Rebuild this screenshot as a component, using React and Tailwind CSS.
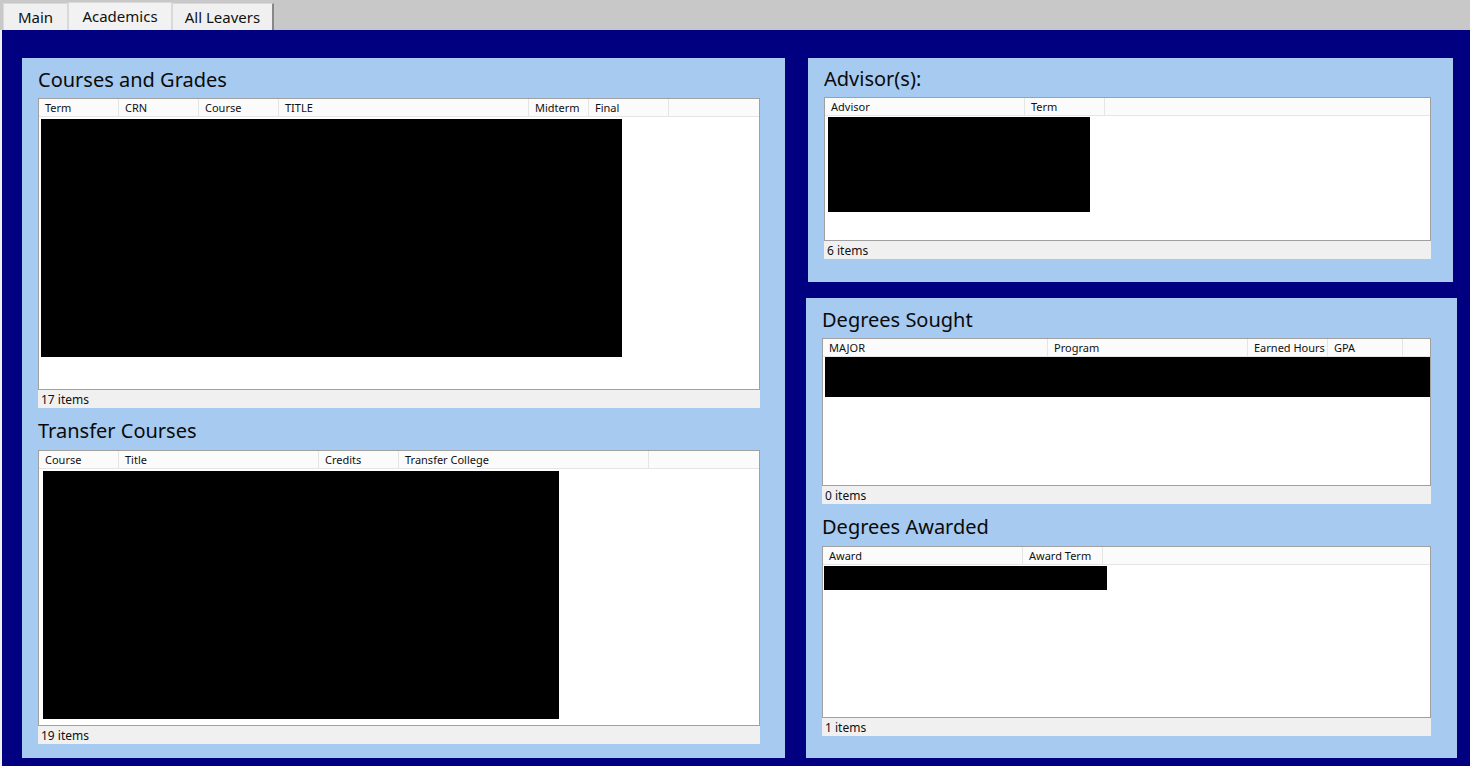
import React from "react";

const F = { fontFamily: '"Segoe UI", "Noto Sans", "Open Sans", sans-serif' };

function Grid({ width, height, cols, box }) {
  return (
    <div className="flex flex-col" style={{ width }}>
      <div
        className="border border-[#a0a0a0] bg-white flex flex-col overflow-hidden"
        style={{ height }}
      >
        <div className="h-[18px] shrink-0 flex bg-[#fbfbfb] border-b border-[#e5e5e5]">
          {cols.map((c, i) => (
            <div
              key={i}
              className="h-full border-r border-[#e5e5e5] text-[11px] leading-[17px] pl-[6px] text-[#111] whitespace-nowrap overflow-hidden"
              style={{ width: c.w }}
            >
              {c.label}
            </div>
          ))}
        </div>
        <div className="flex-1 relative">
          <div
            className="bg-black"
            style={{
              marginLeft: box.x,
              marginTop: box.y,
              width: box.w,
              height: box.h,
            }}
          />
        </div>
      </div>
      <div className="h-[18px] bg-[#f0f0f0] text-[12px] leading-[20px] pl-[3px] text-[#111]">
        {box.label}
      </div>
    </div>
  );
}

function Title({ children, h }) {
  return (
    <div
      className="text-[20px] text-[#0a0a0a] flex items-center whitespace-nowrap pt-[3px]"
      style={{ height: h }}
    >
      {children}
    </div>
  );
}

export default function App() {
  return (
    <div className="w-[1470px] h-[766px] bg-[#f0f0f0] flex flex-col overflow-hidden" style={F}>
      <div className="h-[30px] shrink-0 bg-[#c8c8c8] flex items-end pl-[3px]">
        <div className="h-[27px] w-[65px] bg-[#f0f0f0] border border-b-0 border-[#d9d9d9] text-[15px] flex items-center justify-center text-[#111]">
          Main
        </div>
        <div className="h-[28px] w-[104px] bg-[#f2f2f2] border border-b-0 border-[#d9d9d9] text-[15px] flex items-center justify-center text-[#111]">
          Academics
        </div>
        <div className="h-[27px] w-[102px] bg-[#f0f0f0] border border-b-0 border-l-[#d9d9d9] border-t-[#d9d9d9] border-r-[#888] border-r-2 text-[15px] flex items-center justify-center text-[#111]">
          All Leavers
        </div>
      </div>
      <div className="flex-1 ml-[2px] bg-[#000080] flex pt-[28px] pl-[20px] pb-[8px]">
        {/* Left panel */}
        <div className="w-[763px] h-full bg-[#a6caf0] pl-[16px] flex flex-col">
          <Title h={40}>Courses and Grades</Title>
          <Grid
            width={722}
            height={292}
            cols={[
              { label: "Term", w: 80 },
              { label: "CRN", w: 80 },
              { label: "Course", w: 80 },
              { label: "TITLE", w: 250 },
              { label: "Midterm", w: 60 },
              { label: "Final", w: 80 },
            ]}
            box={{ x: 2, y: 2, w: 581, h: 238, label: "17 items" }}
          />
          <Title h={42}>Transfer Courses</Title>
          <Grid
            width={722}
            height={276}
            cols={[
              { label: "Course", w: 80 },
              { label: "Title", w: 200 },
              { label: "Credits", w: 80 },
              { label: "Transfer College", w: 250 },
            ]}
            box={{ x: 4, y: 2, w: 516, h: 248, label: "19 items" }}
          />
        </div>
        {/* Right column */}
        <div className="flex flex-col">
          <div className="ml-[23px] w-[645px] h-[224px] bg-[#a6caf0] pl-[16px] flex flex-col">
            <Title h={39}>Advisor(s):</Title>
            <Grid
              width={607}
              height={144}
              cols={[
                { label: "Advisor", w: 200 },
                { label: "Term", w: 80 },
              ]}
              box={{ x: 3, y: 1, w: 262, h: 95, label: "6 items" }}
            />
          </div>
          <div className="ml-[21px] mt-[16px] w-[651px] flex-1 bg-[#a6caf0] pl-[16px] flex flex-col">
            <Title h={40}>Degrees Sought</Title>
            <Grid
              width={609}
              height={148}
              cols={[
                { label: "MAJOR", w: 225 },
                { label: "Program", w: 200 },
                { label: "Earned Hours", w: 80 },
                { label: "GPA", w: 75 },
              ]}
              box={{ x: 2, y: 0, w: 605, h: 40, label: "0 items" }}
            />
            <Title h={42}>Degrees Awarded</Title>
            <Grid
              width={609}
              height={172}
              cols={[
                { label: "Award", w: 200 },
                { label: "Award Term", w: 80 },
              ]}
              box={{ x: 1, y: 1, w: 283, h: 24, label: "1 items" }}
            />
          </div>
        </div>
      </div>
    </div>
  );
}
